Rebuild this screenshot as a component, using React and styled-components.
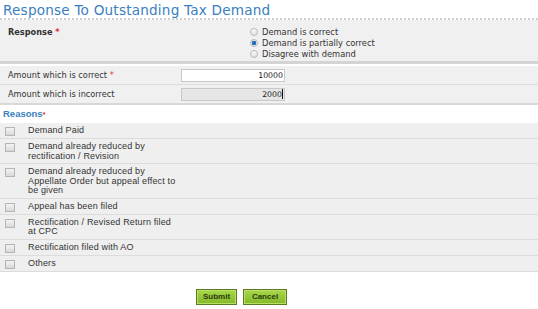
import React from 'react'
import styled, { createGlobalStyle } from 'styled-components'

const GlobalStyle = createGlobalStyle`
  body {
    margin: 0;
    background: #fff;
    font-family: "Liberation Sans", Arial, sans-serif;
  }
`

const reasons = [
  ['Demand Paid'],
  ['Demand already reduced by', 'rectification / Revision'],
  ['Demand already reduced by', 'Appellate Order but appeal effect to', 'be given'],
  ['Appeal has been filed'],
  ['Rectification / Revised Return filed', 'at CPC'],
  ['Rectification filed with AO'],
  ['Others'],
]

const options = ['Demand is correct', 'Demand is partially correct', 'Disagree with demand']

const App = () => {
  return (
    <Page>
      <GlobalStyle />
      <Title>Response To Outstanding Tax Demand</Title>

      <ResponseBox>
        <Label bold>Response <Star>*</Star></Label>
        <RadioGroup>
          {options.map((opt, i) => (
            <RadioRow key={opt}>
              <Radio checked={i === 1} />
              {opt}
            </RadioRow>
          ))}
        </RadioGroup>
      </ResponseBox>

      <AmountRow>
        <Label>Amount which is correct <Star>*</Star></Label>
        <Field>10000</Field>
      </AmountRow>
      <AmountRow last>
        <Label>Amount which is incorrect</Label>
        <Field disabled>2000<Caret /></Field>
      </AmountRow>

      <Reasons>Reasons<Star>*</Star></Reasons>

      <ReasonList>
        {reasons.map((lines) => (
          <ReasonRow key={lines.join(' ')}>
            <Check />
            <ReasonText>
              {lines.map((l) => <div key={l}>{l}</div>)}
            </ReasonText>
          </ReasonRow>
        ))}
      </ReasonList>

      <Buttons>
        <Button>Submit</Button>
        <Button wide>Cancel</Button>
      </Buttons>
    </Page>
  )
}

const Page = styled.div`
  width: 538px;
  height: 309px;
  overflow: hidden;
`

const Title = styled.h2`
  margin: 0;
  padding: 3px 0 1px 3px;
  font-family: "DejaVu Sans", Verdana, sans-serif;
  font-weight: normal;
  font-size: 13.6px;
  letter-spacing: 0.2px;
  line-height: 14px;
  color: #3a80c0;
  border-bottom: 2px dotted #cfcfcf;
`

const ResponseBox = styled.div`
  display: grid;
  grid-template-columns: 242px 1fr;
  background: #f0f0f0;
  padding: 5px 0 5px 8px;
  height: 31px;
  border-bottom: 3px solid #d4d4d4;
`

const Label = styled.div`
  font-family: "DejaVu Sans", Verdana, sans-serif;
  font-size: 8.2px;
  font-weight: ${(p) => (p.bold ? 'bold' : 'normal')};
  color: #333;
  padding-top: 2px;
`

const Star = styled.span`
  color: #e03030;
`

const RadioGroup = styled.div`
  display: flex;
  flex-direction: column;
  padding-top: 1px;
`

const RadioRow = styled.div`
  display: flex;
  align-items: center;
  gap: 4px;
  height: 11px;
  font-family: "DejaVu Sans", Verdana, sans-serif;
  font-size: 8.3px;
  color: #333;
`

const Radio = styled.span`
  width: 6px;
  height: 6px;
  border-radius: 50%;
  border: 1px solid #b8b8b8;
  background: ${(p) =>
    p.checked
      ? 'radial-gradient(circle, #2a6cb8 0 2px, #dde8f4 2.5px)'
      : 'linear-gradient(#fafafa, #e2e2e2)'};
`

const AmountRow = styled.div`
  display: grid;
  grid-template-columns: 173px 104px;
  align-items: center;
  height: 18px;
  padding-left: 8px;
  background: #f0f0f0;
  margin-top: ${(p) => (p.last ? '0' : '2px')};
  border-bottom: ${(p) => (p.last ? '2px solid #d8d8d8' : '1px solid #dedede')};
  & ${Label} {
    padding-top: 0;
  }
`

const Field = styled.div`
  height: 11px;
  box-sizing: content-box;
  border: 1px solid #c8c8c8;
  background: ${(p) => (p.disabled ? '#e6e6e6' : '#fff')};
  font-family: "DejaVu Sans", Verdana, sans-serif;
  font-size: 7.8px;
  line-height: 11px;
  padding-right: 1px;
  color: #222;
  display: flex;
  justify-content: flex-end;
  align-items: center;
`

const Caret = styled.span`
  display: inline-block;
  width: 1px;
  height: 10px;
  background: #111;
`

const Reasons = styled.div`
  padding: 3px 0 0 3px;
  height: 15px;
  box-sizing: border-box;
  font-size: 9.5px;
  font-weight: bold;
  color: #3a80c0;
  margin-bottom: 3px;
  & ${Star} {
    font-size: 8px;
  }
`

const ReasonList = styled.div`
  display: flex;
  flex-direction: column;
`

const ReasonRow = styled.div`
  display: flex;
  align-items: flex-start;
  background: #efefef;
  padding: 3px 0 2px 5px;
  border-bottom: 1px solid #dcdcdc;
`

const Check = styled.span`
  width: 8px;
  height: 7px;
  margin-top: 1px;
  border: 1px solid #b5b5b5;
  background: linear-gradient(#f4f4f4, #d8d8d8);
  flex: none;
`

const ReasonText = styled.div`
  margin-left: 13px;
  font-size: 9px;
  line-height: 9.5px;
  color: #333;
  letter-spacing: 0.15px;
`

const Buttons = styled.div`
  display: flex;
  gap: 6px;
  padding: 17px 0 0 196px;
`

const Button = styled.button`
  width: ${(p) => (p.wide ? '44px' : '41px')};
  height: 16px;
  padding: 0;
  border: 1px solid #5d7a22;
  background: linear-gradient(#a9d84a, #82b828);
  box-shadow: inset 0 0 0 1px #b8e064;
  font-family: "Liberation Sans", Arial, sans-serif;
  font-weight: bold;
  font-size: 8px;
  color: #2c3a10;
  cursor: pointer;
`

export default App
